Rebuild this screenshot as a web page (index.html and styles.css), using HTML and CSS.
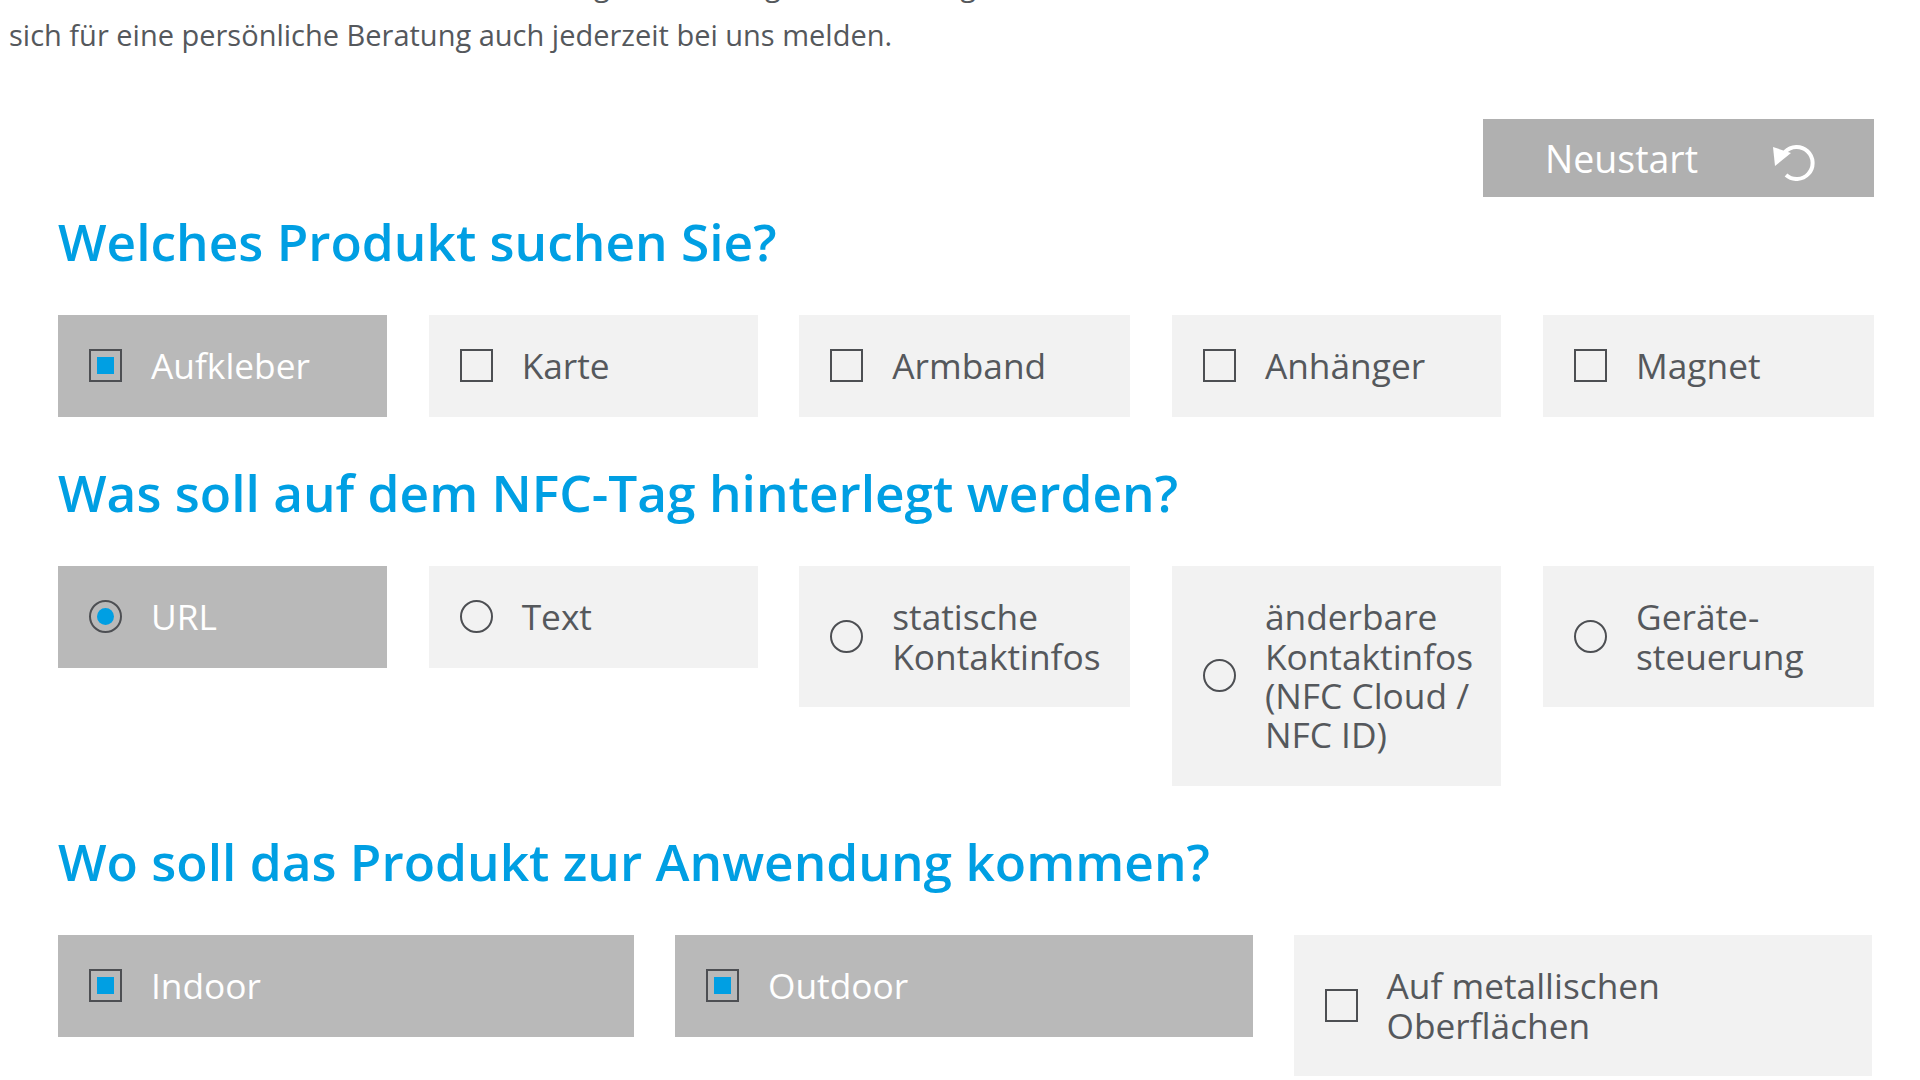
FILE: index.html
```html
<!DOCTYPE html>
<html lang="de">
<head>
<meta charset="utf-8">
<title>Produktfinder</title>
<link rel="stylesheet" href="styles.css">
</head>
<body>
<main class="page">
  <p class="intro">Vielen Dank, sollten Sie weitere Anforderungen oder Fragen oder Anliegen haben und möchten Sie<br>sich für eine persönliche Beratung auch jederzeit bei uns melden.</p>
  <div class="finder">
    <div class="toolbar">
      <button class="restart" type="button">
        <span>Neustart</span>
        <svg class="restart-icon" viewBox="10 10 44 38" aria-hidden="true">
          <path d="M24 19A16 16 0 1 1 25 42" fill="none" stroke="#fff" stroke-width="4"/>
          <polygon points="12,14 30,20 14,33" fill="#fff"/>
        </svg>
      </button>
    </div>

    <h2 class="question first">Welches Produkt suchen Sie?</h2>
    <div class="options five">
      <div class="option selected"><span class="mark check on"></span><span>Aufkleber</span></div>
      <div class="option"><span class="mark check"></span><span>Karte</span></div>
      <div class="option"><span class="mark check"></span><span>Armband</span></div>
      <div class="option"><span class="mark check"></span><span>Anhänger</span></div>
      <div class="option"><span class="mark check"></span><span>Magnet</span></div>
    </div>

    <h2 class="question">Was soll auf dem NFC-Tag hinterlegt werden?</h2>
    <div class="options five">
      <div class="option selected"><span class="mark radio on"></span><span>URL</span></div>
      <div class="option"><span class="mark radio"></span><span>Text</span></div>
      <div class="option"><span class="mark radio"></span><span>statische<br>Kontaktinfos</span></div>
      <div class="option"><span class="mark radio"></span><span>änderbare<br>Kontaktinfos<br>(NFC Cloud /<br>NFC ID)</span></div>
      <div class="option"><span class="mark radio"></span><span>Geräte-<br>steuerung</span></div>
    </div>

    <h2 class="question">Wo soll das Produkt zur Anwendung kommen?</h2>
    <div class="options three">
      <div class="option selected"><span class="mark check on"></span><span>Indoor</span></div>
      <div class="option selected"><span class="mark check on"></span><span>Outdoor</span></div>
      <div class="option"><span class="mark check"></span><span>Auf metallischen<br>Oberflächen</span></div>
    </div>
  </div>
</main>
</body>
</html>
```

FILE: styles.css
```css
* { box-sizing: border-box; }
html, body { margin: 0; height: 100%; background: #fff; }
.page {
  height: 1080px;
  overflow: hidden;
  font-family: "Open Sans", "Liberation Sans", sans-serif;
  color: #55585c;
}
.intro {
  margin: -40px 0 0 9px;
  font-size: 29px;
  line-height: 50px;
  white-space: nowrap;
}
.finder { padding: 59px 46px 0 58px; }
.toolbar { display: flex; justify-content: flex-end; }
.restart {
  width: 391px;
  height: 78px;
  display: flex;
  align-items: center;
  padding: 0 0 0 62px;
  border: 0;
  background: #b0b0b0;
  color: #fff;
  font: 400 37.5px "Open Sans", "Liberation Sans", sans-serif;
}
.restart-icon { width: 44px; height: 38px; margin: 8px 0 0 73px; }
.question {
  margin: 42px 0 40px;
  font-size: 51.4px;
  font-weight: 600;
  line-height: 67px;
  color: #009fe3;
}
.question.first { margin-top: 11px; }
.options { display: grid; align-items: start; }
.five {
  grid-template-columns: 329px 329px 331px 329.5px 331px;
  justify-content: space-between;
}
.three {
  grid-template-columns: 576px 577.5px 578.5px;
  column-gap: 41px;
}
.option {
  display: flex;
  align-items: center;
  gap: 29px;
  padding: 31.33px 10px 31.33px 31px;
  background: #f2f2f2;
  font-size: 35.3px;
  line-height: 39.33px;
}
.option.selected { background: #b9b9b9; color: #fff; }
.mark {
  flex: none;
  width: 33px;
  height: 33px;
  display: flex;
  align-items: center;
  justify-content: center;
  border: 2.5px solid #4d4f53;
}
.radio { border-radius: 50%; }
.mark.on::after {
  content: "";
  width: 17px;
  height: 17px;
  background: #009fe3;
}
.radio.on::after { border-radius: 50%; }
```
